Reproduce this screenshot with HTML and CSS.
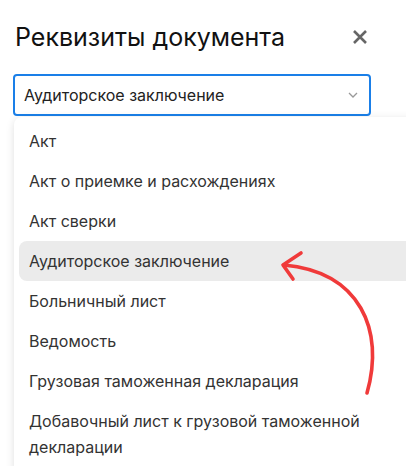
FILE: index.html
```html
<!DOCTYPE html>
<html>
<head>
    <title>Реквизиты документа</title>
    <link rel="stylesheet" href="styles.css">
</head>
<body>
    <div class="panel">
        <div class="header">
            <h1>Реквизиты документа</h1>
            <span class="close">
                <svg width="16" height="16" viewBox="0 0 16 16">
                    <path d="M2 2 L14 14 M14 2 L2 14" stroke="#666" stroke-width="2.6" fill="none"/>
                </svg>
            </span>
        </div>

        <div class="select">
            <span>Аудиторское заключение</span>
            <svg class="chevron" width="10" height="6" viewBox="0 0 10 6">
                <path d="M1 1 L5 5 L9 1" stroke="#999" stroke-width="1.3" fill="none"/>
            </svg>
        </div>

        <!-- dropdown list -->
        <ul class="options">
            <li>Акт</li>
            <li>Акт о приемке и расхождениях</li>
            <li>Акт сверки</li>
            <li class="active">Аудиторское заключение</li>
            <li>Больничный лист</li>
            <li>Ведомость</li>
            <li>Грузовая таможенная декларация</li>
            <li>Добавочный лист к грузовой таможенной декларации</li>
        </ul>

        <svg class="pointer" width="406" height="466" viewBox="0 0 406 466">
            <path d="M367 393 C385 330 360 272 284 265" stroke="#f03a3a" stroke-width="3.6" fill="none" stroke-linecap="round"/>
            <path d="M301 253 L283 265 L293 279" stroke="#f03a3a" stroke-width="3.6" fill="none" stroke-linecap="round" stroke-linejoin="round"/>
        </svg>
    </div>
</body>
</html>
```

FILE: styles.css
```css
body {
    margin: 0;
    background: #ffffff;
    font-family: Inter, "Noto Sans", sans-serif;
    color: #222;
    overflow: hidden;
}
.panel {
    position: relative;
    width: 406px;
    height: 466px;
    overflow: hidden;
}
.header {
    display: flex;
    justify-content: space-between;
    align-items: center;
    padding: 18px 38px 0 15px;
    height: 38px;
}
h1 {
    margin: 0;
    font-size: 25px;
    font-weight: 400;
    color: #111;
}
.close {
    display: flex;
    width: 16px;
    height: 16px;
}
.select {
    display: flex;
    justify-content: space-between;
    align-items: center;
    margin: 18px 0 0 13px;
    width: 358px;
    height: 42px;
    box-sizing: border-box;
    border: 2px solid #1a7fe8;
    border-radius: 4px;
    padding: 0 11px 0 9px;
    font-size: 16px;
    color: #222;
}
.options {
    list-style: none;
    margin: 1px 0 0 14px;
    padding: 4px 0 10px 5px;
    width: 420px;
    background: #fff;
    border-radius: 8px;
    box-shadow: 0 2px 8px rgba(0, 0, 0, 0.13);
    font-size: 16px;
    color: #333;
}
.options li {
    padding: 7px 40px 7px 10px;
    line-height: 26px;
    border-radius: 8px;
    max-width: 340px;
}
.options li.active {
    background: #ebebeb;
    max-width: none;
}
.pointer {
    position: absolute;
    left: 0;
    top: 0;
}
```
